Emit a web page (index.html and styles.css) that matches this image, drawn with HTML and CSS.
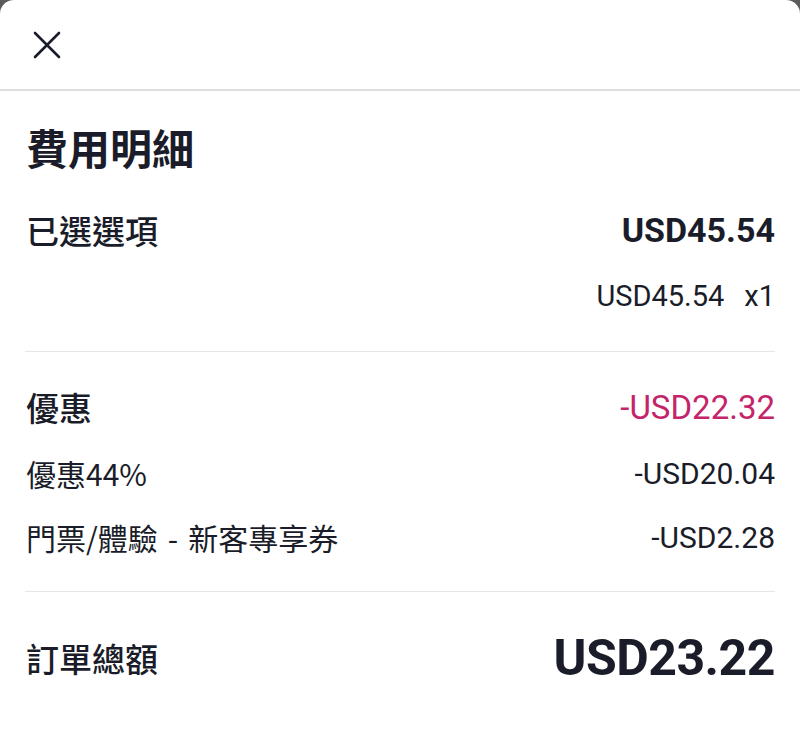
FILE: index.html
```html
<!DOCTYPE html>
<html lang="zh-Hant">
<head>
<meta charset="utf-8">
<title>費用明細</title>
<link rel="stylesheet" href="styles.css">
</head>
<body>
<div class="sheet">
  <header class="sheet-header">
    <button class="close-btn" aria-label="關閉">
      <svg width="28" height="28" viewBox="0 0 28 28"><path d="M2 2 L26 26 M26 2 L2 26" stroke="#1a1d29" stroke-width="2.6" stroke-linecap="round" fill="none"/></svg>
    </button>
  </header>
  <main class="content">
    <h1 class="title">費用明細</h1>
    <section class="group">
      <div class="row row-head">
        <span class="label-strong">已選選項</span>
        <span class="amount-strong">USD45.54</span>
      </div>
      <div class="row row-sub end">
        <span class="amount">USD45.54</span><span class="qty">x1</span>
      </div>
    </section>
    <hr class="divider">
    <section class="group">
      <div class="row row-head">
        <span class="label-strong">優惠</span>
        <span class="amount-pink">-USD22.32</span>
      </div>
      <div class="row row-sub">
        <span class="label">優惠44%</span>
        <span class="amount">-USD20.04</span>
      </div>
      <div class="row row-sub">
        <span class="label">門票/體驗<span class="dash">-</span>新客專享券</span>
        <span class="amount">-USD2.28</span>
      </div>
    </section>
    <hr class="divider">
    <div class="row row-total">
      <span class="label-strong">訂單總額</span>
      <span class="amount-total">USD23.22</span>
    </div>
  </main>
</div>
</body>
</html>
```

FILE: styles.css
```css
* { box-sizing: border-box; }
html, body { margin: 0; padding: 0; }
body {
  background: #5b5b5b;
  font-family: Roboto, "Noto Sans CJK TC", sans-serif;
  color: #1a1d29;
  width: 800px;
  height: 741px;
  overflow: hidden;
}
.sheet {
  background: #ffffff;
  border-radius: 14px 14px 0 0;
  height: 741px;
}
.sheet-header {
  height: 91px;
  border-bottom: 2px solid #dedede;
  display: flex;
  align-items: flex-start;
  padding: 31px 0 0 33px;
}
.close-btn {
  border: 0;
  background: none;
  padding: 0;
  width: 28px;
  height: 28px;
  display: block;
}
.close-btn svg { display: block; }
.content {
  padding: 28px 25px 0 26px;
}
.title {
  margin: 0;
  font-family: "Noto Sans CJK TC", sans-serif;
  font-size: 42px;
  font-weight: 700;
  line-height: 56px;
}
.group { display: flex; flex-direction: column; }
.row {
  display: flex;
  justify-content: space-between;
  align-items: center;
  height: 44px;
}
.row.end { justify-content: flex-end; }
.row-head { margin-top: 33px; }
.row-sub { margin-top: 22px; }
.group .row-sub + .row-sub { margin-top: 20px; }
.label-strong {
  font-family: "Noto Sans CJK TC", sans-serif;
  font-size: 33px;
  font-weight: 500;
}
.label {
  font-family: "Noto Sans CJK TC", sans-serif;
  font-size: 30px;
  font-weight: 400;
}
.dash { margin: 0 10px; }
.amount-strong {
  font-size: 34px;
  font-weight: 700;
}
.amount {
  font-size: 30px;
  font-weight: 400;
}
.row.end .amount { font-size: 29px; }
.qty {
  font-size: 29px;
  margin-left: 20px;
}
.amount-pink {
  font-size: 33px;
  font-weight: 400;
  color: #c4246a;
}
.divider {
  border: 0;
  border-top: 1px solid #e6e6e6;
  margin: 33px 0 0 -1px;
}
.group:nth-of-type(2) + .divider { margin-top: 32px; }
.row-total {
  height: 60px;
  margin-top: 36px;
}
.amount-total {
  font-size: 50px;
  font-weight: 700;
  letter-spacing: -0.5px;
}
```
